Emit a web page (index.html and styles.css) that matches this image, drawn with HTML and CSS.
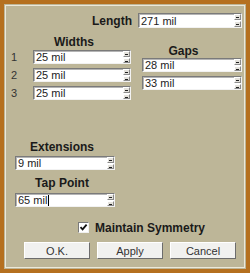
FILE: index.html
```html
<!DOCTYPE html>
<html>
<head>
<meta charset="utf-8">
<link rel="stylesheet" href="styles.css">
</head>
<body>
<div class="dialog">
  <div class="panel">
    <div class="length-row">
      <span class="bold-label">Length</span>
      <div class="field w-length"><span class="value">271 mil</span><span class="spin"><i class="up"></i><i class="down"></i></span></div>
    </div>

    <div class="columns">
      <div class="widths">
        <div class="heading widths-heading">Widths</div>
        <div class="row"><span class="num">1</span><div class="field w-std"><span class="value">25 mil</span><span class="spin"><i class="up"></i><i class="down"></i></span></div></div>
        <div class="row"><span class="num">2</span><div class="field w-std"><span class="value">25 mil</span><span class="spin"><i class="up"></i><i class="down"></i></span></div></div>
        <div class="row"><span class="num">3</span><div class="field w-std"><span class="value">25 mil</span><span class="spin"><i class="up"></i><i class="down"></i></span></div></div>
      </div>
      <div class="gaps">
        <div class="heading gaps-heading">Gaps</div>
        <div class="gap-row"><div class="field w-gap"><span class="value">28 mil</span><span class="spin"><i class="up"></i><i class="down"></i></span></div></div>
        <div class="gap-row"><div class="field w-gap"><span class="value">33 mil</span><span class="spin"><i class="up"></i><i class="down"></i></span></div></div>
      </div>
    </div>

    <div class="single ext">
      <div class="heading">Extensions</div>
      <div class="field w-single"><span class="value">9 mil</span><span class="spin"><i class="up"></i><i class="down"></i></span></div>
    </div>
    <div class="single tap">
      <div class="heading">Tap Point</div>
      <div class="field w-single"><span class="value">65 mil<span class="caret"></span></span><span class="spin"><i class="up"></i><i class="down"></i></span></div>
    </div>

    <div class="check-row">
      <span class="checkbox"><svg width="9" height="9" viewBox="0 0 9 9"><path d="M1.5 4.2 L3.6 6.4 L7.6 1.6" fill="none" stroke="#111" stroke-width="1.8"/></svg></span>
      <span class="check-label">Maintain Symmetry</span>
    </div>

    <div class="buttons">
      <div class="btn">O.K.</div>
      <div class="btn">Apply</div>
      <div class="btn">Cancel</div>
    </div>
  </div>
</div>
</body>
</html>
```

FILE: styles.css
```css
html, body {
  margin: 0;
  padding: 0;
  background: #b5701f;
}
body {
  width: 250px;
  height: 273px;
  overflow: hidden;
  font-family: "Liberation Sans", Arial, sans-serif;
  color: #1c1c1c;
}
.dialog {
  box-sizing: border-box;
  width: 250px;
  height: 273px;
  border: 4px solid #b5701f;
  background: #bdb698;
  padding: 1px;
}
.panel {
  box-sizing: border-box;
  height: 100%;
  border: 1px solid #ece8da;
  padding: 7px 2px 0 5px;
}
.length-row {
  display: flex;
  justify-content: flex-end;
  align-items: center;
  gap: 6px;
  height: 15px;
}
.bold-label, .heading, .check-label {
  font-weight: bold;
  font-size: 12px;
  color: #1a1a1a;
}
.heading {
  line-height: 14px;
  text-align: center;
}
.field {
  box-sizing: border-box;
  height: 14px;
  display: flex;
  align-items: stretch;
  background: #fff;
  border: 1px solid;
  border-color: #7a7a7a #f2f2f2 #f2f2f2 #7a7a7a;
  box-shadow: inset 1px 1px 0 #b4b4b4;
}
.w-length { width: 104px; height: 15px; }
.w-std { width: 98px; }
.w-gap { width: 100px; }
.w-single { width: 100px; }
.value {
  flex: 1;
  font-size: 11px;
  line-height: 12px;
  padding-left: 2px;
  color: #222;
  display: flex;
  align-items: center;
}
.caret {
  display: inline-block;
  width: 1px;
  height: 11px;
  background: #000;
  margin-left: 1px;
}
.spin {
  width: 7px;
  display: flex;
  flex-direction: column;
  gap: 1px;
}
.spin i {
  flex: 1;
  background: #e4e2dc;
  border: 1px solid;
  border-color: #fff #8a8a8a #8a8a8a #fff;
  position: relative;
}
.spin i::after {
  content: "";
  position: absolute;
  left: 1px;
  top: 2px;
  width: 3px;
  height: 1px;
  background: #222;
}

.columns {
  display: flex;
  margin-top: 7px;
  gap: 11px;
}
.widths {
  display: flex;
  flex-direction: column;
  gap: 4px;
}
.widths-heading {
  margin-left: 22px;
  padding-right: 16px;
  margin-bottom: -3px;
}
.row {
  display: flex;
  align-items: center;
}
.num {
  width: 22px;
  font-size: 11px;
  color: #333;
}
.gaps {
  display: flex;
  flex-direction: column;
  gap: 4px;
  padding-top: 9px;
}
.gaps-heading {
  padding-right: 17px;
  margin-bottom: -4px;
}
.single {
  display: flex;
  flex-direction: column;
  align-items: flex-start;
  margin-left: 4px;
}
.single .heading {
  width: 100px;
  padding-right: 6px;
  box-sizing: border-box;
  margin-bottom: 2px;
}
.ext { margin-top: 40px; }
.tap { margin-top: 6px; }
.tap .heading { margin-bottom: 3px; }

.check-row {
  display: flex;
  align-items: center;
  gap: 6px;
  margin-top: 15px;
  margin-left: 67px;
  height: 11px;
}
.checkbox {
  box-sizing: border-box;
  width: 11px;
  height: 11px;
  background: #fff;
  border: 1px solid;
  border-color: #7a7a7a #f0f0f0 #f0f0f0 #7a7a7a;
  display: flex;
  align-items: center;
  justify-content: center;
}
.check-label {
  font-size: 12px;
}
.buttons {
  display: flex;
  gap: 7px;
  margin-top: 9px;
  margin-left: 13px;
}
.btn {
  box-sizing: border-box;
  width: 66px;
  height: 17px;
  background: #f1f1ef;
  border: 1px solid;
  border-color: #ffffff #6c6c6c #6c6c6c #ffffff;
  font-size: 11px;
  color: #333;
  display: flex;
  align-items: center;
  justify-content: center;
}
```
